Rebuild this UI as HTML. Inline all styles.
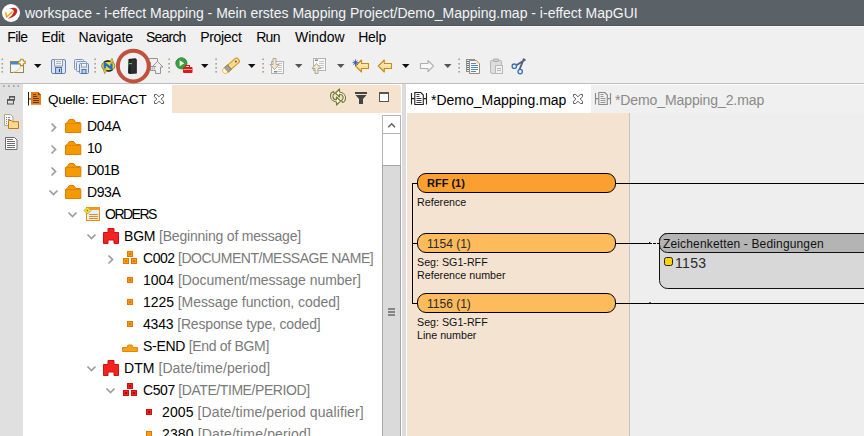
<!DOCTYPE html>
<html><head><meta charset="utf-8">
<style>
*{margin:0;padding:0;box-sizing:border-box}
html,body{width:864px;height:436px;overflow:hidden;background:#f0f0f0;font-family:"Liberation Sans",sans-serif}
.a{position:absolute}
.t{position:absolute;white-space:nowrap;line-height:1}
#title{left:0;top:0;width:864px;height:26px;background:#5a6167;border-bottom:1px solid #4d5459}
#tline{left:0;top:26px;width:864px;height:1px;background:#f9f9f9}
#menu{left:0;top:26px;width:864px;height:57px;background:#f0f0f0}
#tbline{left:0;top:83px;width:864px;height:1px;background:#bebebe}
#strip{left:0;top:84px;width:23px;height:352px;background:#e0e0e0}
#lpanel{left:23px;top:84px;width:379px;height:352px;background:#fff}
#lhead{left:172px;top:85px;width:229px;height:28px;background:#f5e3d0;border-top-right-radius:2px}
#sb{left:382px;top:115px;width:19px;height:330px;border:1px solid #b4b4b4;background:#fff}
#thumb{left:382px;top:165px;width:19px;height:280px;border:1px solid #a6a6a6;background:#dadada}
#sash{left:402px;top:84px;width:4px;height:352px;background:#dcdcdc}
#rpanel{left:406px;top:84px;width:458px;height:352px;background:#fff}
#rtabbar{left:591px;top:84px;width:273px;height:29px;background:#f0f0f0;border-top:1px solid #fbfbfb}
#canvas{left:407px;top:113px;width:457px;height:323px;background:#eeeeee}
#col{left:407px;top:113px;width:222px;height:323px;background:#f5e3d1}
#coldiv{left:629px;top:113px;width:1px;height:323px;background:#c4c4c4}
.menu{font-size:14px;color:#000;top:30px}
.tree{font-size:14px;color:#000}
.tree span{color:#7a7a7a}
.box{position:absolute;border:1px solid #000;border-radius:9px;height:20px}
.cv{font-size:10.7px;color:#111}
</style></head><body>
<div id="title" class="a"></div>
<div class="t" style="left:25px;top:6px;font-size:14px;color:#f4f4f4">workspace - i-effect Mapping - Mein erstes Mapping Project/Demo_Mapping.map - i-effect MapGUI</div>
<div id="menu" class="a"></div><div id="tline" class="a"></div>
<div class="t menu" style="left:7.2px;letter-spacing:-0.60px">File</div>
<div class="t menu" style="left:41.5px;letter-spacing:-0.33px">Edit</div>
<div class="t menu" style="left:78.5px;letter-spacing:-0.10px">Navigate</div>
<div class="t menu" style="left:146.1px;letter-spacing:-0.82px">Search</div>
<div class="t menu" style="left:200.2px;letter-spacing:-0.33px">Project</div>
<div class="t menu" style="left:256.2px;letter-spacing:-0.70px">Run</div>
<div class="t menu" style="left:295.0px;letter-spacing:-0.04px">Window</div>
<div class="t menu" style="left:358.3px;letter-spacing:-0.30px">Help</div>
<div id="tbline" class="a"></div>
<div id="strip" class="a"></div>
<div id="lpanel" class="a"></div>
<div id="lhead" class="a"></div>
<div class="t" style="left:48px;top:93px;font-size:13.5px;letter-spacing:-0.35px;color:#000">Quelle: EDIFACT</div>
<div id="sb" class="a"></div>
<div id="thumb" class="a"></div>
<div id="sash" class="a"></div>
<div id="rpanel" class="a"></div>
<div id="rtabbar" class="a"></div>
<div class="t" style="left:431px;top:93px;font-size:14px;color:#000">*Demo_Mapping.map</div>
<div class="t" style="left:615px;top:93px;font-size:14px;letter-spacing:-0.1px;color:#8a8a8a">*Demo_Mapping_2.map</div>
<div id="canvas" class="a"></div>
<div id="col" class="a"></div>
<div id="coldiv" class="a"></div>

<!-- tree -->
<div class="t tree" style="left:87px;top:119px;letter-spacing:-0.333px">D04A</div>
<div class="t tree" style="left:87px;top:141px;letter-spacing:-0.500px">10</div>
<div class="t tree" style="left:87px;top:163px;letter-spacing:-0.733px">D01B</div>
<div class="t tree" style="left:87px;top:185px;letter-spacing:-0.433px">D93A</div>
<div class="t tree" style="left:105px;top:207px;letter-spacing:-1.5px">ORDERS</div>
<div class="t tree" style="left:124px;top:229px;letter-spacing:-0.200px">BGM <span>[Beginning of message]</span></div>
<div class="t tree" style="left:143px;top:251px;letter-spacing:-0.475px">C002 <span>[DOCUMENT/MESSAGE NAME]</span></div>
<div class="t tree" style="left:143px;top:273px;letter-spacing:-0.028px">1004 <span>[Document/message number]</span></div>
<div class="t tree" style="left:143px;top:295px;letter-spacing:-0.059px">1225 <span>[Message function, coded]</span></div>
<div class="t tree" style="left:143px;top:317px;letter-spacing:-0.173px">4343 <span>[Response type, coded]</span></div>
<div class="t tree" style="left:143px;top:339px;letter-spacing:-0.306px">S-END <span>[End of BGM]</span></div>
<div class="t tree" style="left:124px;top:361px;letter-spacing:0.067px">DTM <span>[Date/time/period]</span></div>
<div class="t tree" style="left:143px;top:383px;letter-spacing:-0.423px">C507 <span>[DATE/TIME/PERIOD]</span></div>
<div class="t tree" style="left:162px;top:405px;letter-spacing:0.100px">2005 <span>[Date/time/period qualifier]</span></div>
<div class="t tree" style="left:162px;top:427px;letter-spacing:0.150px">2380 <span>[Date/time/period]</span></div>

<!-- canvas -->
<div class="box" style="left:417px;top:173px;width:199px;background:#fba030"></div>
<div class="t cv" style="left:427px;top:178px;font-weight:bold;font-size:11px">RFF (1)</div>
<div class="t cv" style="left:417px;top:197px">Reference</div>
<div class="box" style="left:417px;top:233px;width:199px;background:#fdbb5c"></div>
<div class="t cv" style="left:427px;top:238px;font-size:12px;color:#2a2a2a">1154 (1)</div>
<div class="t cv" style="left:417px;top:257px">Seg: SG1-RFF</div>
<div class="t cv" style="left:417px;top:270px">Reference number</div>
<div class="box" style="left:417px;top:293px;width:199px;background:#fdbb5c"></div>
<div class="t cv" style="left:427px;top:298px;font-size:12px;color:#2a2a2a">1156 (1)</div>
<div class="t cv" style="left:417px;top:317px">Seg: SG1-RFF</div>
<div class="t cv" style="left:417px;top:330px">Line number</div>

<svg class="a" style="left:0;top:0" width="864" height="436" viewBox="0 0 864 436">
<!-- title logo -->
<circle cx="11" cy="13" r="9" fill="#fff"/>
<path d="M9 8.6 C14 6.8 18.5 8 17 12.3 C15.5 16.3 11.5 18.3 7.8 18.8 C10.5 16.8 12.8 14.8 13.6 12.3 C14.3 10.2 12.5 8.8 9 8.6Z" fill="#c4281c"/>
<path d="M5.5 12.3 L6.7 17 L12.6 11.5" stroke="#f2a11a" stroke-width="1.5" fill="none" stroke-linejoin="round"/>

<!-- toolbar separators -->
<g fill="#a89f8c">
<rect x="1.5" y="58.5" width="1.6" height="1.6"/><rect x="1.5" y="63" width="1.6" height="1.6"/><rect x="1.5" y="67" width="1.6" height="1.6"/><rect x="1.5" y="71" width="1.6" height="1.6"/>
<rect x="94.3" y="58.5" width="1.6" height="1.6"/><rect x="94.3" y="63" width="1.6" height="1.6"/><rect x="94.3" y="67" width="1.6" height="1.6"/><rect x="94.3" y="71" width="1.6" height="1.6"/>
<rect x="168.3" y="58.5" width="1.6" height="1.6"/><rect x="168.3" y="63" width="1.6" height="1.6"/><rect x="168.3" y="67" width="1.6" height="1.6"/><rect x="168.3" y="71" width="1.6" height="1.6"/>
<rect x="215.3" y="58.5" width="1.6" height="1.6"/><rect x="215.3" y="63" width="1.6" height="1.6"/><rect x="215.3" y="67" width="1.6" height="1.6"/><rect x="215.3" y="71" width="1.6" height="1.6"/>
<rect x="262.3" y="58.5" width="1.6" height="1.6"/><rect x="262.3" y="63" width="1.6" height="1.6"/><rect x="262.3" y="67" width="1.6" height="1.6"/><rect x="262.3" y="71" width="1.6" height="1.6"/>
<rect x="458.3" y="58.5" width="1.6" height="1.6"/><rect x="458.3" y="63" width="1.6" height="1.6"/><rect x="458.3" y="67" width="1.6" height="1.6"/><rect x="458.3" y="71" width="1.6" height="1.6"/>
</g>
<!-- dropdown arrows -->
<path d="M34 64h7.5l-3.75 4z" fill="#111"/>
<path d="M201 64h7.5l-3.75 4z" fill="#111"/>
<path d="M248 64h7.5l-3.75 4z" fill="#111"/>
<path d="M295 64h7.5l-3.75 4z" fill="#555"/>
<path d="M337 64h7.5l-3.75 4z" fill="#555"/>
<path d="M402 64h7.5l-3.75 4z" fill="#111"/>
<path d="M444 64h7.5l-3.75 4z" fill="#555"/>

<!-- new -->
<rect x="10.5" y="61.5" width="13" height="11" fill="#eef7fe" stroke="#9b8446"/>
<rect x="11" y="62" width="9" height="2.5" fill="#3f8bd8"/>
<path d="M13 72 Q20 71 21 65" stroke="#f1d68a" stroke-width="1.2" fill="none"/>
<path d="M20.6 59.2 H23 L23.5 61.1 L25.2 61.3 V63.5 L23.5 63.7 L23 65.6 H20.6 L20.1 63.7 L18.4 63.5 V61.3 L20.1 61.1Z" fill="#f8edc8" stroke="#b38b22" stroke-width="1.1" stroke-linejoin="round"/>
<path d="M21.8 60.3v4.2M19.7 62.4h4.2" stroke="#fff" stroke-width="1.1"/>

<!-- save -->
<rect x="51.5" y="59.5" width="14" height="14" rx="1.5" fill="#dde6f2" stroke="#6787b8"/>
<rect x="54.5" y="59.5" width="8" height="6.5" fill="#f2f2ee" stroke="#8aa0b6"/>
<path d="M56 61.5h5M56 63.5h5" stroke="#a8b4c0"/>
<rect x="55.5" y="67.5" width="6" height="6" fill="#b9cbe6" stroke="#4f73ad"/>
<rect x="59" y="69" width="1" height="3" fill="#2e4f86"/>
<!-- save all -->
<rect x="74.5" y="59.5" width="9" height="10" rx="1" fill="#e9eef6" stroke="#7d96bf"/>
<rect x="76.5" y="61.5" width="10" height="10" rx="1" fill="#e9eef6" stroke="#7d96bf"/>
<rect x="79.5" y="63.5" width="9" height="10" rx="1" fill="#dde6f2" stroke="#6787b8"/>
<rect x="81.5" y="63.5" width="5" height="3.5" fill="#f2f2ee" stroke="#8aa0b6"/>
<rect x="82" y="69.5" width="4" height="4" fill="#b9cbe6" stroke="#4f73ad"/>

<!-- sync yellow/blue -->
<ellipse cx="108.3" cy="66" rx="6.6" ry="5.2" fill="#f5d93a" stroke="#7a7a28" stroke-width="0.9"/>
<path d="M110 62 L112 58.3 L113.5 62.5Z" fill="#f5d93a" stroke="#7a7a28" stroke-width="0.6"/>
<path d="M106.5 70 L104.8 73.8 L103.2 69.5Z" fill="#f5d93a" stroke="#7a7a28" stroke-width="0.6"/>
<path d="M104 62.5 A5 4 0 0 1 110 61.5 M112.5 69.5 A5 4 0 0 1 106.5 70.5" stroke="#1a1a1a" stroke-width="1.3" fill="none"/>
<path d="M104.8 68.5 V63.5 L111.5 68.5 V63.5" stroke="#1f70c8" stroke-width="2.3" fill="none" stroke-linejoin="round"/>

<!-- server -->
<path d="M128.5 59 L135.5 58.3 L136.8 59.5 L136.8 73.5 L129.5 74 L128 73 Z" fill="#1c1c1c"/>
<path d="M130.5 60 L135.8 59.6 L135.8 73 L130.5 73.3Z" fill="#2e2e2e"/>
<rect x="129" y="63" width="3" height="1.2" fill="#3cd23c"/>

<!-- export grey -->
<g stroke="#959595" fill="none" stroke-width="1">
<path d="M149 58.5 H157.5 V62"/>
<path d="M157.5 61.5 L163 67 H160.5 V73.5 H155.5 V70.5"/>
<path d="M157.5 61.5 L152.5 66.5"/>
<path d="M150.5 62 V70.5 H155.5 M150.5 66.5 H156"/>
</g>
<rect x="151.5" y="67.5" width="1.5" height="2" fill="#b0b0b0"/><rect x="153.5" y="67.5" width="1.5" height="2" fill="#b0b0b0"/>

<!-- run -->
<circle cx="181.4" cy="63.3" r="5.6" fill="#36a43e" stroke="#2b7d33" stroke-width="0.8"/>
<path d="M179.6 60.3 L184.2 63.3 L179.6 66.3Z" fill="#fff"/>
<rect x="183" y="67" width="9.5" height="6" rx="1" fill="#e01818"/>
<rect x="185.5" y="65.5" width="4" height="2" fill="none" stroke="#e01818"/>
<path d="M183.5 69.5h8.5" stroke="#fff" stroke-width="0.6"/>

<!-- pen -->
<g transform="translate(231 65.8) rotate(-41)">
<rect x="-3" y="-2.8" width="13" height="5.6" rx="2.5" fill="#f9dc8a" stroke="#d8901c" stroke-width="1"/>
<rect x="-6.5" y="-3" width="4.5" height="6" fill="#a29ea8" stroke="#806c4c" stroke-width="0.8"/>
<path d="M-6.5 -3 L-10 -2 L-10 2 L-6.5 3Z" fill="#fffbd0" stroke="#eab040" stroke-width="0.8"/>
<circle cx="6.5" cy="0" r="0.9" fill="#3a5aa8"/>
</g>
<!-- import -->
<rect x="271.5" y="61.5" width="12" height="12" fill="#f8f8f6" stroke="#b4b4b4"/>
<path d="M278 63.5h4M278 65.5h4M278 67.5h4M278 69.5h4M277 71.5h5" stroke="#c6c6c6"/>
<rect x="274" y="71" width="3" height="1.5" fill="#7c8aa0"/>
<path d="M273 58.5 h3 v6 h3 l-4.5 5 l-4.5 -5 h3z" fill="#efe9d6" stroke="#b0a890"/>
<!-- export -->
<rect x="313.5" y="58.5" width="12" height="12" fill="#f8f8f6" stroke="#b4b4b4"/>
<path d="M319 61.5h5M319 63.5h5M319 65.5h5M320 67.5h4" stroke="#c6c6c6"/>
<rect x="315" y="59.5" width="3" height="1.5" fill="#7c8aa0"/>
<path d="M315 73.5 v-5 h-3 l4.5 -5 l4.5 5 h-3 v5z" fill="#efe9d6" stroke="#b0a890"/>

<!-- last edit -->
<defs><linearGradient id="ag" x1="0" y1="0" x2="0" y2="1"><stop offset="0" stop-color="#fff8d8"/><stop offset="1" stop-color="#f6cf6a"/></linearGradient></defs>
<path d="M355.5 66 L361.5 60 V63.5 H368.5 V68.5 H361.5 V72Z" fill="url(#ag)" stroke="#c88a1c" stroke-width="1.1" stroke-linejoin="round"/>
<path d="M355.5 59.5v6.5M352.5 62.7h6M353.4 60.6l4.2 4.2M357.6 60.6l-4.2 4.2" stroke="#2858a8" stroke-width="0.9"/>
<!-- back -->
<path d="M378.3 66 L384.3 60 V63.5 H391.5 V68.5 H384.3 V72Z" fill="url(#ag)" stroke="#c88a1c" stroke-width="1.1" stroke-linejoin="round"/>
<!-- forward -->
<path d="M433.5 66 L428 60.5 V63.5 H420.5 V68.5 H428 V71.5Z" fill="#f8f8f8" stroke="#b0b0b0" stroke-width="1.1" stroke-linejoin="round"/>

<!-- copy -->
<rect x="466.5" y="59.5" width="8" height="12" fill="#e6edf6" stroke="#9a8c6c"/>
<path d="M467 61.5h2M467 63.5h2M467 65.5h2M467 67.5h2M467 69.5h2" stroke="#4a7ac0"/>
<path d="M469.5 60.5 h7 l3 3 v10 h-10z" fill="#f4f8fc" stroke="#9a8c6c"/>
<path d="M476.5 60.5 l3 3 h-3z" fill="#f0d070"/>
<path d="M471 63.5h5M471 65.5h7M471 67.5h7M471 69.5h7M471 71.5h5" stroke="#5a84c0"/>
<!-- paste -->
<rect x="490.5" y="60.5" width="11" height="13" rx="1.5" fill="#dedede" stroke="#b8b8b8"/>
<rect x="493" y="59" width="6" height="2.5" rx="1" fill="#cfcfcf" stroke="#b0b0b0"/>
<rect x="495.5" y="65.5" width="7" height="8" fill="#f2f2f2" stroke="#b8b8b8"/>
<path d="M497 68.5h4M497 70.5h4" stroke="#b8b8b8"/>
<!-- scissors -->
<path d="M516 65.5 L525.5 59.5 M519.5 69.5 L524 58.5" stroke="#52617c" stroke-width="1.9"/>
<circle cx="514.3" cy="66.2" r="2.2" fill="#f0f0f0" stroke="#3570b8" stroke-width="1.3"/>
<circle cx="520.2" cy="71.6" r="2.2" fill="#f0f0f0" stroke="#3570b8" stroke-width="1.3"/>

<!-- red ring -->
<circle cx="133.3" cy="66.1" r="15.4" fill="none" stroke="#c0513c" stroke-width="3.9"/>
</svg>

<svg class="a" style="left:0;top:0" width="864" height="436" viewBox="0 0 864 436">
<!-- strip dots -->
<g fill="#9a968e"><rect x="3" y="85.3" width="1.6" height="1.5"/><rect x="8" y="85.3" width="1.6" height="1.5"/><rect x="13" y="85.3" width="1.6" height="1.5"/><rect x="17.5" y="85.3" width="1.6" height="1.5"/></g>
<!-- restore -->
<path d="M9.5 99.5 V96.5 H14.5 V100.5 H13.5" fill="none" stroke="#555" stroke-width="1"/>
<rect x="9" y="96" width="6" height="1.6" fill="#555"/>
<rect x="7.5" y="99.5" width="6" height="4.5" fill="#e0e0e0" stroke="#555" stroke-width="1"/>
<rect x="7" y="99" width="7" height="1.8" fill="#555"/>
<!-- folder doc -->
<path d="M4.5 114.5 h6 l2.5 2.5 v8.5 h-8.5z" fill="#f6f6f2" stroke="#b6a47a"/>
<path d="M6 117.5h1M8 117.5h2M6 119.5h1M8 119.5h2M6 121.5h1M8 121.5h2M6 123.5h1M8 123.5h2" stroke="#6a8ad0"/>
<path d="M8.5 128.5 v-8 h3 l1 1.2 h6 v6.8z" fill="#fcd98c" stroke="#c9761a"/>
<!-- doc -->
<path d="M5.5 137.5 h9 l2.5 2.5 v9.5 h-11.5z" fill="#fff" stroke="#6c6c6c"/>
<path d="M7 139.5h6M7 141.5h8M7 143.5h8M7 145.5h8M7 147.5h8" stroke="#6c6c6c"/>

<!-- quelle tab icon -->
<path d="M28.5 92v13.5M28.5 99h3" stroke="#222" stroke-width="1"/>
<path d="M31 92 h7.5 l2.5 2.5 v10.2 h-10z" fill="#ea7c12"/>
<path d="M38 92 l3 3 h-3z" fill="#6b4a2a"/>
<path d="M33 94.5h3M33 96.5h4M33 98.5h6M33 100.5h6M33 102.5h6" stroke="#4a3420" stroke-width="0.9"/>
<!-- close X tab1 -->
<path transform="translate(154.0 94.0)" d="M0.5 0.5 h2.2 l2.3 2.3 l2.3 -2.3 h2.2 v2.2 l-2.3 2.3 l2.3 2.3 v2.2 h-2.2 l-2.3 -2.3 l-2.3 2.3 h-2.2 v-2.2 l2.3 -2.3 l-2.3 -2.3z" fill="#fff" stroke="#5c5c5c" stroke-width="1"/>
<!-- header sync olive -->
<g transform="translate(676 0) scale(-1 1)">
<path d="M336.5 89 L336.5 92 C333 92.5 330.5 95 330.5 98 C330.5 100.5 332 102 333.5 102.5 L334.5 100.5 C333 99.5 332.5 98.5 332.8 97 C333.3 95.3 335 94.2 336.5 94.2 L336.5 97 L340.5 93 Z" fill="#fff" stroke="#6f7a2a" stroke-width="1.1" stroke-linejoin="round"/>
<path d="M339.5 105 L339.5 102 C343 101.5 345.5 99 345.5 96 C345.5 93.5 344 92 342.5 91.5 L341.5 93.5 C343 94.5 343.5 95.5 343.2 97 C342.7 98.7 341 99.8 339.5 99.8 L339.5 97 L335.5 101 Z" fill="#fff" stroke="#6f7a2a" stroke-width="1.1" stroke-linejoin="round"/>
</g>
<!-- filter -->
<rect x="355" y="92" width="12" height="2" fill="#444"/>
<path d="M355.5 95 h11 l-3.5 4 v5 h-4 v-5z" fill="#444"/>
<!-- maximize -->
<rect x="379.5" y="92.5" width="9" height="9" fill="#fff" stroke="#555"/>
<rect x="379" y="92" width="10" height="2" fill="#555"/>

<!-- scrollbar arrow -->
<path d="M388.3 127.3 L391.7 123.8 L395 127.3" fill="none" stroke="#606060" stroke-width="1.4"/>
<path d="M382 133.5h19" stroke="#b4b4b4"/>
<!-- grip -->
<path d="M388 309h7M388 312h7M388 315h7" stroke="#6a6a6a" stroke-width="1.3"/>

<!-- right tab icons -->
<g stroke="#222" fill="none" stroke-width="1.1">
<path d="M411.5 93v11.5M426.5 93v11.5M411.5 98.6h3M423.5 98.6h3"/>
<path d="M414.8 92.5 h6 l2.5 2.5 v9.5 h-8.5z" fill="#fff"/>
<path d="M416.5 94.5h3M416.5 96.5h3M416.5 98.5h5M416.5 100.5h5M416.5 102.5h5" stroke-width="0.9"/>
</g>
<path transform="translate(573.0 94.0)" d="M0.5 0.5 h2.2 l2.3 2.3 l2.3 -2.3 h2.2 v2.2 l-2.3 2.3 l2.3 2.3 v2.2 h-2.2 l-2.3 -2.3 l-2.3 2.3 h-2.2 v-2.2 l2.3 -2.3 l-2.3 -2.3z" fill="#fff" stroke="#5c5c5c" stroke-width="1"/>
<g stroke="#8a8a8a" fill="none" stroke-width="1.1">
<path d="M595.5 93v11.5M610.5 93v11.5M595.5 98.6h3M607.5 98.6h3"/>
<path d="M598.8 92.5 h6 l2.5 2.5 v9.5 h-8.5z" fill="#f0f0f0"/>
<path d="M600.5 94.5h3M600.5 96.5h3M600.5 98.5h5M600.5 100.5h5M600.5 102.5h5" stroke-width="0.9"/>
</g>

<!-- tree chevrons -->
<g fill="none" stroke="#9c9c9c" stroke-width="1.7">
<path d="M51.5 123.5 L55.5 127.5 L51.5 131.5"/>
<path d="M51.5 145.5 L55.5 149.5 L51.5 153.5"/>
<path d="M51.5 167.5 L55.5 171.5 L51.5 175.5"/>
<path d="M49.5 190.5 L53.5 194.5 L57.5 190.5"/>
<path d="M68.5 212.5 L72.5 216.5 L76.5 212.5"/>
<path d="M87.5 234.5 L91.5 238.5 L95.5 234.5"/>
<path d="M108.5 255.5 L112.5 259.5 L108.5 263.5"/>
<path d="M87.5 366.5 L91.5 370.5 L95.5 366.5"/>
<path d="M106.5 388.5 L110.5 392.5 L114.5 388.5"/>
</g>
<!-- folders -->
<g fill="#f39a00" stroke="#e37c00" stroke-width="1">
<path d="M65.5 132.5 v-9 l1.8 -1 l2 -3 h4.5 l2 3 h4.5 l0.5 1 v9z"/>
<path d="M65.5 154.5 v-9 l1.8 -1 l2 -3 h4.5 l2 3 h4.5 l0.5 1 v9z"/>
<path d="M65.5 176.5 v-9 l1.8 -1 l2 -3 h4.5 l2 3 h4.5 l0.5 1 v9z"/>
<path d="M65.5 198.5 v-9 l1.8 -1 l2 -3 h4.5 l2 3 h4.5 l0.5 1 v9z"/>
</g>
<g stroke="#e37c00" stroke-width="0.8" fill="none">
<path d="M66 123.5h14M66 145.5h14M66 167.5h14M66 189.5h14"/>
</g>
<!-- ORDERS icon -->
<rect x="86.5" y="207.5" width="13" height="13" fill="#e2f2fb" stroke="#ea8a1a"/>
<rect x="86.5" y="207.5" width="13" height="2.5" fill="#f29a22"/>
<path d="M89 214.5h9M89 216.5h9M89 218.5h9" stroke="#ea8a1a" stroke-width="1"/>
<path d="M87.5 207 L91 210.5 L87.5 214 L84 210.5Z" fill="#f8e840" stroke="#b89a20" stroke-width="0.9"/><circle cx="87.5" cy="210.5" r="0.9" fill="#a08010"/>
<!-- BGM / DTM red -->
<path d="M103.5 243.5 v-11 h4.5 v-4 h6 v4 h4.5 v11 h-4.5 v-3.5 h-6 v3.5z" fill="#f52222" stroke="#c81414" stroke-width="1"/>
<path d="M103.5 375.5 v-11 h4.5 v-4 h6 v4 h4.5 v11 h-4.5 v-3.5 h-6 v3.5z" fill="#f52222" stroke="#c81414" stroke-width="1"/>
<!-- C002 squares orange -->
<g fill="#f59c1a" stroke="#e07800" stroke-width="1">
<rect x="127.5" y="251.5" width="5" height="5"/><rect x="123.5" y="258.5" width="5" height="5"/><rect x="131.5" y="258.5" width="5" height="5"/>
<rect x="127.5" y="277.5" width="5" height="5"/>
<rect x="127.5" y="299.5" width="5" height="5"/>
<rect x="127.5" y="321.5" width="5" height="5"/>
<rect x="146.5" y="431.5" width="5" height="5"/>
</g>
<g fill="#e07800">
<rect x="129" y="253" width="2" height="2"/><rect x="125" y="260" width="2" height="2"/><rect x="133" y="260" width="2" height="2"/>
<rect x="129" y="279" width="2" height="2"/><rect x="129" y="301" width="2" height="2"/><rect x="129" y="323" width="2" height="2"/>
</g>
<!-- S-END -->
<path d="M122.5 351.5 v-4 h4.5 l1 -2.5 h4 l1 2.5 h4.5 v4z" fill="#f5a21a" stroke="#e48a00" stroke-width="1"/>
<!-- C507 red squares -->
<g fill="#f52222" stroke="#c81414" stroke-width="1">
<rect x="127.5" y="383.5" width="5" height="5"/><rect x="123.5" y="390.5" width="5" height="5"/><rect x="131.5" y="390.5" width="5" height="5"/>
<rect x="146.5" y="409.5" width="5" height="5"/>
</g>
<g fill="#b00000"><rect x="129" y="385" width="2" height="2"/><rect x="125" y="392" width="2" height="2"/><rect x="133" y="392" width="2" height="2"/><rect x="148" y="411" width="2" height="2"/></g>

<!-- canvas lines -->
<g stroke="#000" stroke-width="1" fill="none">
<path d="M412.5 183v120.5M412 183.5h5M412 243.5h5M412 303.5h5"/>
<path d="M616 183.5H864"/>
<path d="M616 243.5H652"/>
<path d="M653 243.5h3M657 243.5h3"/>
<path d="M616 303.5H864"/>
</g>
<path d="M649 242.5h1.2M649.5 302.5h1.2" stroke="#000"/>
<!-- Zeichenketten box -->
<rect x="659.5" y="233.5" width="260" height="55" rx="8" fill="#d8d8d8" stroke="#111"/>
<path d="M659.5 251.5 v-10 a8 8 0 0 1 8 -8 h250 v19 h-250 a8 8 0 0 1 -8 -8z" fill="#b4b4b4" stroke="#111"/>
<rect x="664.5" y="257.5" width="8" height="8" rx="2" fill="#ffd200" stroke="#222"/>
</svg>
<div class="t cv" style="left:663px;top:238px;font-size:12px;letter-spacing:0.15px;color:#111">Zeichenketten - Bedingungen</div>
<div class="t" style="left:675px;top:256px;font-size:14px;letter-spacing:0.3px;color:#2a2a2a">1153</div>
</body></html>
